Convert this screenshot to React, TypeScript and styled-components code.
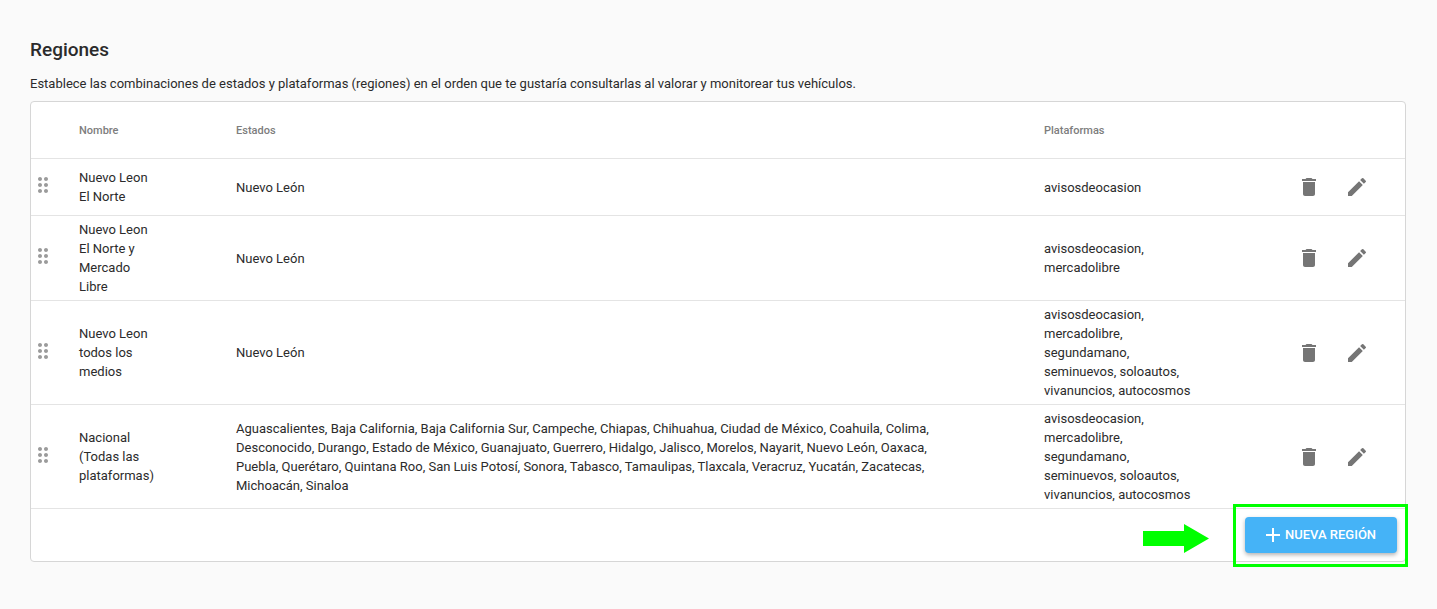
import React from "react";
import styled, { createGlobalStyle } from "styled-components";
import { MdAdd, MdDelete, MdDragIndicator, MdEdit } from "react-icons/md";

const GlobalStyle = createGlobalStyle`
  *, *::before, *::after { box-sizing: border-box; }
  body {
    margin: 0;
    background: #fafafa;
    color: #2b2b2b;
    font-family: Roboto, "Liberation Sans", sans-serif;
    font-size: 13px;
    line-height: 19px;
  }
`;

const Page = styled.main`
  padding: 36px 31px 48px 30px;
`;

const Title = styled.h1`
  margin: 0 0 10px;
  font-size: 19px;
  font-weight: 500;
  line-height: 28px;
`;

const Description = styled.p`
  margin: 0 0 8px;
`;

const Card = styled.section`
  background: #fff;
  border: 1px solid #d6d6d6;
  border-radius: 4px;
`;

const Table = styled.table`
  width: 100%;
  table-layout: fixed;
  border-collapse: separate;
  border-spacing: 0;
`;

const Column = styled.col<{ $width?: number }>`
  width: ${({ $width }) => ($width ? `${$width}px` : "auto")};
`;

const HeaderCell = styled.th`
  height: 57px;
  padding: 0 16px;
  border-bottom: 1px solid #e4e4e4;
  color: #7d7d7d;
  font-size: 11px;
  font-weight: 500;
  text-align: left;
`;

const Cell = styled.td<{ $end?: number }>`
  padding: 4px ${({ $end = 0 }) => $end}px 4px 16px;
  border-bottom: 1px solid #e4e4e4;
  vertical-align: middle;
`;

const GripCell = styled(Cell)`
  padding: 0;
`;

const IconButton = styled.button`
  display: flex;
  align-items: center;
  justify-content: center;
  width: 48px;
  height: 48px;
  padding: 0;
  border: 0;
  border-radius: 50%;
  background: transparent;
  color: #757575;
  cursor: pointer;
`;

const GripButton = styled(IconButton)`
  width: 24px;
  padding-bottom: 4px;
  color: #9b9b9b;
  cursor: grab;
`;

const Actions = styled.div`
  display: flex;
`;

const Footer = styled.footer`
  display: flex;
  justify-content: flex-end;
  padding: 8px;
`;

const Callout = styled.div`
  position: relative;
`;

const Highlight = styled.div`
  position: absolute;
  inset: -13px -11px -14px -12px;
  border: 3px solid #00ff00;
  pointer-events: none;
`;

const Arrow = styled.svg`
  position: absolute;
  top: 7px;
  right: 188px;
  width: 66px;
  height: 29px;
  fill: #00ff00;
`;

const AddButton = styled.button`
  display: flex;
  align-items: center;
  min-width: 152px;
  height: 36px;
  padding: 0 16px;
  border: 0;
  border-radius: 4px;
  background: #45b3f7;
  box-shadow: 0 2px 4px rgba(0, 0, 0, 0.3);
  color: #fff;
  font: 500 13px/20px Roboto, "Liberation Sans", sans-serif;
  text-transform: uppercase;
  white-space: nowrap;
  cursor: pointer;
`;

interface Region {
  name: string;
  states: string;
  platforms: string;
}

const allPlatforms =
  "avisosdeocasion, mercadolibre, segundamano, seminuevos, soloautos, vivanuncios, autocosmos";

const regions: Region[] = [
  { name: "Nuevo Leon El Norte", states: "Nuevo León", platforms: "avisosdeocasion" },
  {
    name: "Nuevo Leon El Norte y Mercado Libre",
    states: "Nuevo León",
    platforms: "avisosdeocasion, mercadolibre",
  },
  { name: "Nuevo Leon todos los medios", states: "Nuevo León", platforms: allPlatforms },
  {
    name: "Nacional (Todas las plataformas)",
    states:
      "Aguascalientes, Baja California, Baja California Sur, Campeche, Chiapas, Chihuahua, Ciudad de México, Coahuila, Colima, Desconocido, Durango, Estado de México, Guanajuato, Guerrero, Hidalgo, Jalisco, Morelos, Nayarit, Nuevo León, Oaxaca, Puebla, Querétaro, Quintana Roo, San Luis Potosí, Sonora, Tabasco, Tamaulipas, Tlaxcala, Veracruz, Yucatán, Zacatecas, Michoacán, Sinaloa",
    platforms: allPlatforms,
  },
];

function RegionRow({ region }: { region: Region }) {
  return (
    <tr>
      <GripCell>
        <GripButton type="button" aria-label={`Mover ${region.name}`}>
          <MdDragIndicator size={24} />
        </GripButton>
      </GripCell>
      <Cell $end={64}>{region.name}</Cell>
      <Cell $end={80}>{region.states}</Cell>
      <Cell $end={72}>{region.platforms}</Cell>
      <Cell>
        <Actions>
          <IconButton type="button" aria-label={`Eliminar ${region.name}`}>
            <MdDelete size={24} />
          </IconButton>
          <IconButton type="button" aria-label={`Editar ${region.name}`}>
            <MdEdit size={24} />
          </IconButton>
        </Actions>
      </Cell>
    </tr>
  );
}

export default function App() {
  return (
    <>
      <GlobalStyle />
      <Page>
        <Title>Regiones</Title>
        <Description>
          Establece las combinaciones de estados y plataformas (regiones) en el orden que te
          gustaría consultarlas al valorar y monitorear tus vehículos.
        </Description>
        <Card>
          <Table>
            <colgroup>
              <Column $width={32} />
              <Column $width={157} />
              <Column />
              <Column $width={241} />
              <Column $width={136} />
            </colgroup>
            <thead>
              <tr>
                <HeaderCell />
                <HeaderCell scope="col">Nombre</HeaderCell>
                <HeaderCell scope="col">Estados</HeaderCell>
                <HeaderCell scope="col">Plataformas</HeaderCell>
                <HeaderCell />
              </tr>
            </thead>
            <tbody>
              {regions.map((region) => (
                <RegionRow key={region.name} region={region} />
              ))}
            </tbody>
          </Table>
          <Footer>
            <Callout>
              <AddButton type="button">
                <MdAdd size={24} />
                Nueva región
              </AddButton>
              <Highlight />
              <Arrow viewBox="0 0 66 29" aria-hidden="true">
                <path d="M0 7H41V0L66 14.5L41 29V22H0Z" />
              </Arrow>
            </Callout>
          </Footer>
        </Card>
      </Page>
    </>
  );
}
